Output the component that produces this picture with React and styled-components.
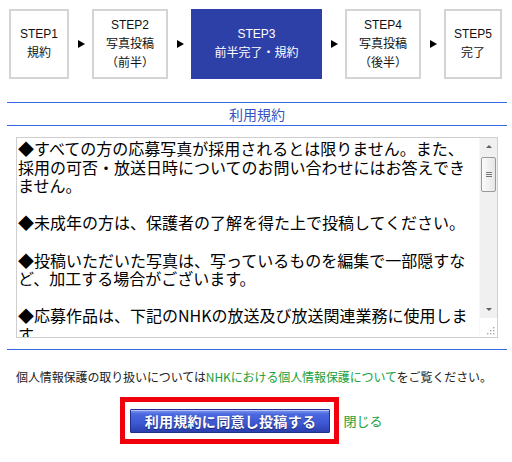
import React from 'react'
import styled, { createGlobalStyle } from 'styled-components'

const steps = [
  { no: 'STEP1', lines: ['規約'], width: 60 },
  { no: 'STEP2', lines: ['写真投稿', '（前半）'], width: 76 },
  { no: 'STEP3', lines: ['前半完了・規約'], width: 131, active: true },
  { no: 'STEP4', lines: ['写真投稿', '（後半）'], width: 76 },
  { no: 'STEP5', lines: ['完了'], width: 58 },
];

const terms = [
  '◆すべての方の応募写真が採用されるとは限りません。また、採用の可否・放送日時についてのお問い合わせにはお答えできません。',
  '◆未成年の方は、保護者の了解を得た上で投稿してください。',
  '◆投稿いただいた写真は、写っているものを編集で一部隠すなど、加工する場合がございます。',
  '◆応募作品は、下記のNHKの放送及び放送関連業務に使用します。',
  '・総合テレビ、Eテレ、BS放送等の番組',
  '・NHKのホームページ',
];

const GlobalStyle = createGlobalStyle`
  body {
    margin: 0;
    background: #fff;
    font-family: "Liberation Sans", "Noto Sans CJK JP", sans-serif;
    color: #111;
  }
`;

const Page = styled.div`
  width: 500px;
  padding: 9px 5px 0 7px;
`;

const StepRow = styled.div`
  display: flex;
  align-items: center;
  padding-left: 2px;
`;

const StepBox = styled.div`
  box-sizing: border-box;
  width: ${(p) => p.$w}px;
  height: 70px;
  border: 2px solid ${(p) => (p.$active ? '#2c40a8' : '#d4d4d4')};
  background: ${(p) => (p.$active ? '#2c40a8' : '#fff')};
  color: ${(p) => (p.$active ? '#fff' : '#111')};
  display: flex;
  flex-direction: column;
  align-items: center;
  justify-content: center;
  font-size: 12px;
  line-height: 19px;
  white-space: nowrap;
`;

const Arrow = styled.div`
  width: 23px;
  display: flex;
  justify-content: center;
  &::before {
    content: '';
    border-left: 7px solid #000;
    border-top: 4.5px solid transparent;
    border-bottom: 4.5px solid transparent;
    margin-left: 1px;
  }
`;

const TitleBar = styled.div`
  margin-top: 23px;
  height: 22px;
  border-top: 1px solid #3467e6;
  border-bottom: 1px solid #3467e6;
  display: flex;
  align-items: center;
  justify-content: center;
  font-family: "Noto Sans CJK JP", sans-serif;
  font-size: 14px;
  color: #3553c4;
`;

const TermsBox = styled.div`
  margin: 11px 9px 0 9px;
  height: 201px;
  box-sizing: border-box;
  border: 1px solid #cfcfcf;
  display: flex;
`;

const TermsText = styled.div`
  flex: 1;
  overflow: hidden;
  padding: 1px 8px 0 1px;
  font-family: "Noto Sans CJK JP", sans-serif;
  font-size: 16px;
  line-height: 18.6px;
  color: #000;
  p {
    margin: 0 0 18.6px;
  }
`;

const ScrollCol = styled.div`
  width: 17px;
  display: flex;
  flex-direction: column;
  background: #f0f0f0;
  border-left: 1px solid #f7f7f7;
`;

const ScrollBtn = styled.div`
  height: 17px;
  display: flex;
  align-items: center;
  justify-content: center;
  &::before {
    content: '';
    border-left: 3px solid transparent;
    border-right: 3px solid transparent;
    ${(p) => (p.$down ? 'border-top: 3px solid #606060;' : 'border-bottom: 3px solid #606060;')}
  }
`;

const Thumb = styled.div`
  margin: 2px 1px 0;
  height: 35px;
  box-sizing: border-box;
  border: 1px solid #9a9a9a;
  border-radius: 2px;
  background: linear-gradient(to right, #fbfbfb, #e6e6e6);
  display: flex;
  flex-direction: column;
  align-items: center;
  justify-content: center;
  gap: 1px;
  span {
    width: 6px;
    height: 1px;
    background: #777;
  }
`;

const Track = styled.div`
  flex: 1;
`;

const Corner = styled.div`
  height: 17px;
  background: #fff;
  display: flex;
  align-items: flex-end;
  justify-content: flex-end;
  padding: 0 2px 2px 0;
`;

const Rule = styled.div`
  margin-top: 11px;
  border-top: 1px solid #3467e6;
`;

const Note = styled.p`
  margin: 19px 0 0 9px;
  font-family: "Noto Sans CJK JP", sans-serif;
  font-size: 12px;
  line-height: 16px;
  color: #222;
  white-space: nowrap;
  letter-spacing: -0.1px;
`;

const GreenLink = styled.a`
  color: #18a03c;
  text-decoration: none;
  font-size: ${(p) => p.$size || 12}px;
`;

const ActionRow = styled.div`
  margin-top: 12px;
  padding-right: 11px;
  display: flex;
  align-items: center;
  justify-content: center;
  gap: 4px;
`;

const Highlight = styled.div`
  border: 5px solid #f0000c;
  padding: 7px 4px 6px 5px;
`;

const AgreeButton = styled.button`
  width: 200px;
  height: 24px;
  padding: 0;
  border: 1px solid #1f2f92;
  border-radius: 1px;
  background: linear-gradient(#7d95ee 0%, #4a68de 20%, #3c58d2 60%, #2b3fae 100%);
  box-shadow: inset 0 1px 0 rgba(255, 255, 255, 0.45);
  color: #fff;
  font-family: "Noto Sans CJK JP", sans-serif;
  font-weight: bold;
  font-size: 14px;
  letter-spacing: 0.3px;
  text-shadow: 0 1px 1px rgba(0, 0, 40, 0.5);
`;

const Grip = () => (
  <svg width="9" height="9" viewBox="0 0 9 9">
    {[[7, 1], [7, 4], [4, 4], [7, 7], [4, 7], [1, 7]].map(([x, y]) => (
      <rect key={`${x}-${y}`} x={x} y={y} width="1.4" height="1.4" fill="#a8a8a8" />
    ))}
  </svg>
);

const App = () => (
  <Page>
    <GlobalStyle />
    <StepRow>
      {steps.map((s, i) => (
        <React.Fragment key={s.no}>
          {i > 0 && <Arrow />}
          <StepBox $w={s.width} $active={s.active}>
            <span>{s.no}</span>
            {s.lines.map((l) => (
              <span key={l}>{l}</span>
            ))}
          </StepBox>
        </React.Fragment>
      ))}
    </StepRow>

    <TitleBar>利用規約</TitleBar>

    <TermsBox>
      <TermsText>
        {terms.map((t) => (
          <p key={t}>{t}</p>
        ))}
      </TermsText>
      <ScrollCol>
        <ScrollBtn />
        <Thumb>
          <span />
          <span />
          <span />
        </Thumb>
        <Track />
        <ScrollBtn $down />
        <Corner>
          <Grip />
        </Corner>
      </ScrollCol>
    </TermsBox>

    <Rule />

    <Note>
      個人情報保護の取り扱いについては
      <GreenLink href="#">NHKにおける個人情報保護について</GreenLink>
      をご覧ください。
    </Note>

    <ActionRow>
      <Highlight>
        <AgreeButton type="button">利用規約に同意し投稿する</AgreeButton>
      </Highlight>
      <GreenLink href="#" $size={13}>閉じる</GreenLink>
    </ActionRow>
  </Page>
);

export default App
